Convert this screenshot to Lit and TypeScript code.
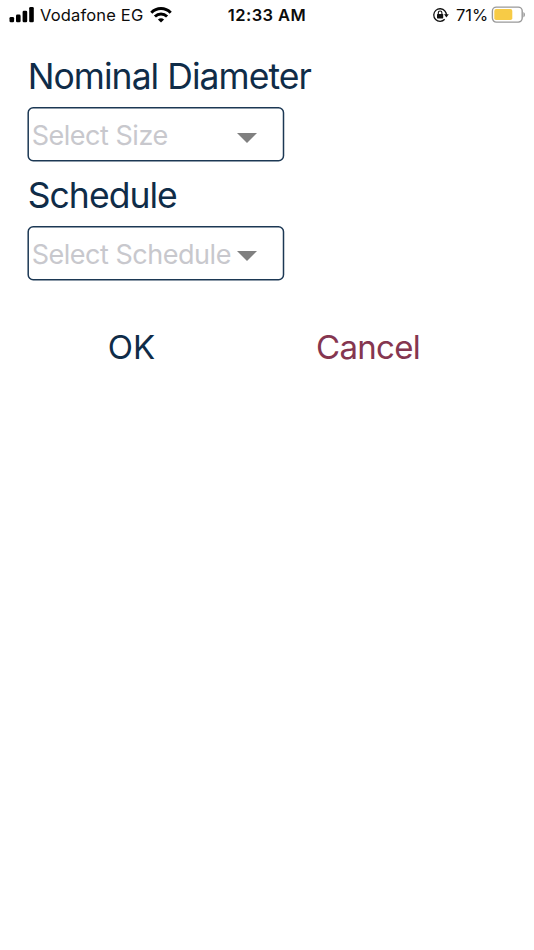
import { LitElement, html, css } from "lit";
import { customElement, property } from "lit/decorators.js";

@customElement("status-bar")
class StatusBar extends LitElement {
  static styles = css`
    :host { display: grid; grid-template-columns: 1fr auto 1fr; align-items: center; height: 30px; padding: 0 9px 0 9px; font-size: 16.5px; line-height: 30px; color: #0c0c0c; white-space: nowrap; }
    .side { display: flex; align-items: center; height: 30px; }
    .right { justify-content: flex-end; }
    .carrier { margin-left: 6px; letter-spacing: 0.17px; }
    .wifi { margin-left: 7px; }
    .time { font-weight: 600; letter-spacing: 0.42px; }
    .percent { margin: 0 3px 0 7px; letter-spacing: -0.1px; }
    svg { display: block; flex: none; }
  `;
  render() {
    return html`
      <div class="side">
        <svg width="25" height="16" viewBox="0 0 25 16" fill="#000">
          <rect x="0.5" y="10" width="4.6" height="5.3" rx="1.3" /><rect x="7" y="7.6" width="4.6" height="7.7" rx="1.3" />
          <rect x="13.6" y="3.8" width="4.6" height="11.5" rx="1.3" /><rect x="20.2" y="0" width="4.6" height="15.3" rx="1.3" />
        </svg>
        <span class="carrier">Vodafone EG</span>
        <svg class="wifi" width="22" height="18" viewBox="0 0 22 18">
          <g fill="none" stroke="#000" stroke-width="3"><path d="M1.3 6.7Q5.4 2.5 11 2.5T20.7 6.7" /><path d="M4.9 10.5Q7.6 7.9 11 7.9T17.1 10.5" /></g>
          <path d="M7.9 13.4Q11 10.9 14.1 13.4L11 16.5Z" />
        </svg>
      </div>
      <span class="time">12:33 AM</span>
      <div class="side right">
        <svg width="17" height="16" viewBox="0 0 17 16">
          <path d="M12.9 4A6.3 6.3 0 1 0 12.7 12.3M12.9 4A6.3 6.3 0 0 1 14.4 8.2" fill="none" stroke="#111" stroke-width="1.3" />
          <path d="M12 7.3H16.8L14.4 10.5Z" fill="#111" />
          <rect x="5" y="7" width="6.2" height="4.4" rx="0.6" fill="#111" />
          <path d="M6.3 7.3V5.8a1.8 1.8 0 0 1 3.6 0V7.3" fill="none" stroke="#111" stroke-width="1.1" />
        </svg>
        <span class="percent">71%</span>
        <svg width="34" height="18" viewBox="0 0 34 18">
          <rect x="1.4" y="1.1" width="29.8" height="15" rx="4" fill="#fff" stroke="#999" stroke-width="1.4" />
          <rect x="3.3" y="3.1" width="18" height="11" rx="1.8" fill="#f7cb46" />
          <path d="M32.4 6Q34 6.8 34 8.7T32.4 11.4Z" fill="#999" />
        </svg>
      </div>`;
  }
}

@customElement("select-field")
class SelectField extends LitElement {
  @property() label = "";
  @property() placeholder = "";
  static styles = css`
    :host { display: block; }
    .label { height: 43px; line-height: 46px; padding-left: 0.5px; font-size: 35.5px; letter-spacing: -0.95px; color: #0f2c48; white-space: nowrap; }
    .box { width: 258px; height: 55px; margin-top: 10px; position: relative; display: flex; align-items: center; justify-content: space-between; box-sizing: border-box; padding: 0 28px 0 4.5px; }
    .frame { position: absolute; inset: 0; }
    .placeholder { font-size: 27px; line-height: 52px; padding-top: 3px; letter-spacing: -0.48px; color: #c8c8cd; white-space: nowrap; }
    .arrow { flex: none; margin-top: 6px; }
  `;
  render() {
    return html`
      <div class="label">${this.label}</div>
      <div class="box">
        <svg class="frame" width="258" height="55"><rect x="1.2" y="0.8" width="255.3" height="53" rx="5" fill="none" stroke="#1c3854" stroke-width="1.5" /></svg>
        <span class="placeholder">${this.placeholder}</span>
        <svg class="arrow" width="20" height="10" viewBox="0 0 20 10"><path d="M0 0H20L10 10Z" fill="#808080" /></svg>
      </div>`;
  }
}

@customElement("app-root")
class AppRoot extends LitElement {
  static styles = css`
    :host { display: block; height: 950px; overflow: hidden; background: #fff; font-family: Inter, "Liberation Sans", sans-serif; }
    .form { display: flex; flex-direction: column; gap: 10.6px; padding: 24px 0 0 27.2px; }
    .actions { display: grid; grid-template-columns: 208px 208px; justify-content: start; margin: 45.4px 0 0 27.5px; }
    button { border: 0; padding: 0; background: none; font: inherit; font-size: 33px; line-height: 42px; color: #0f2c48; }
    .cancel { color: #853650; margin-left: 57px; letter-spacing: -0.72px; }
  `;
  render() {
    return html`
      <status-bar></status-bar>
      <div class="form">
        <select-field label="Nominal Diameter" placeholder="Select Size"></select-field>
        <select-field label="Schedule" placeholder="Select Schedule"></select-field>
      </div>
      <div class="actions"><button>OK</button><button class="cancel">Cancel</button></div>`;
  }
}
